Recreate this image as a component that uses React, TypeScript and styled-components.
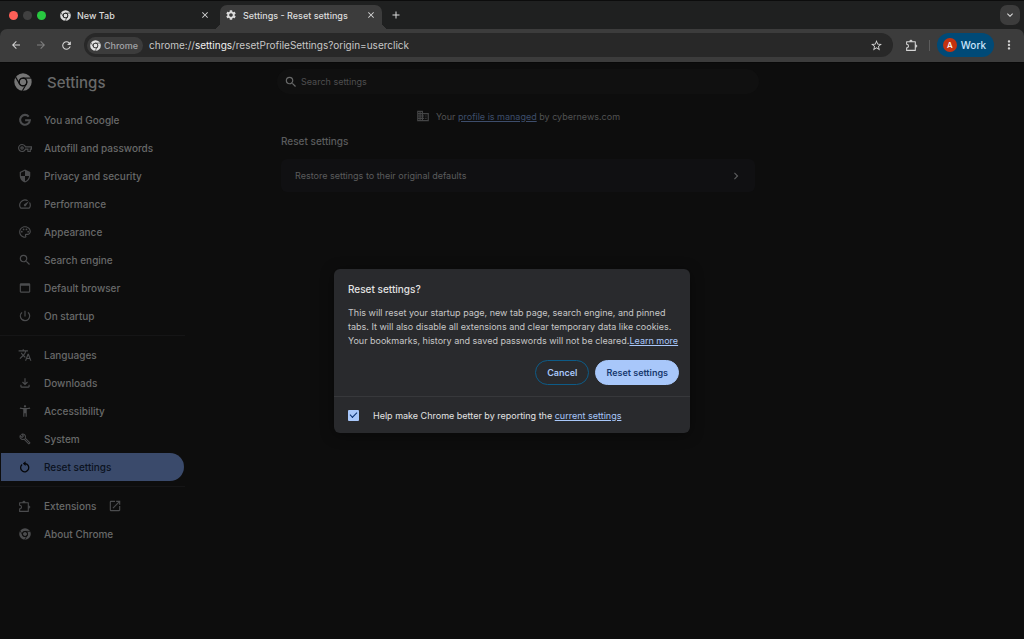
import React from "react";
import styled, { createGlobalStyle, css } from "styled-components";
import {
  MdAccessibilityNew,
  MdAdd,
  MdArrowBack,
  MdArrowForward,
  MdBusiness,
  MdChevronRight,
  MdClose,
  MdExpandMore,
  MdMoreVert,
  MdOpenInNew,
  MdOutlineBuild,
  MdOutlineFileDownload,
  MdOutlinePalette,
  MdOutlineSpeed,
  MdOutlineVpnKey,
  MdPowerSettingsNew,
  MdRefresh,
  MdSearch,
  MdSecurity,
  MdSettings,
  MdStarBorder,
  MdTranslate,
  MdWebAsset,
} from "react-icons/md";

const Global = createGlobalStyle`
  * { box-sizing: border-box; }
  html, body, #root { height: 100%; margin: 0; }
  body { background: #0d0d0d; font-family: Inter, "Liberation Sans", sans-serif; font-size: 9px; }
  button, input { font: inherit; color: inherit; }
  button { border: 0; padding: 0; background: none; display: flex; align-items: center; justify-content: center; }
  svg { display: block; flex: none; }
`;

/* ---------- icons ---------- */

type IconProps = { size?: number };

const ChromeIcon = ({ size = 12 }: IconProps) => (
  <svg width={size} height={size} viewBox="0 0 24 24" fill="none" stroke="currentColor">
    <circle cx="12" cy="12" r="8.7" strokeWidth="5.8" />
    <circle cx="12" cy="12" r="4.2" fill="currentColor" stroke="none" />
    <g stroke="var(--cut, #1f2020)" strokeWidth="1.5">
      <circle cx="12" cy="12" r="5.2" />
      <path d="M12 6.8H22.5" />
      <path d="M7.5 14.6L2.2 5.5" />
      <path d="M16.5 14.6L11.2 23.7" />
    </g>
  </svg>
);

const GoogleIcon = ({ size = 12 }: IconProps) => (
  <svg width={size} height={size} viewBox="0 0 24 24" fill="none" stroke="currentColor" strokeWidth="3.6">
    <path d="M18.4 6.2A8.4 8.4 0 1 0 20.4 12.4H12.2" />
  </svg>
);

const PuzzleIcon = ({ size = 12 }: IconProps) => (
  <svg width={size} height={size} viewBox="0 0 24 24" fill="none" stroke="currentColor" strokeWidth="2" strokeLinejoin="round">
    <path d="M3 5H19V21H3V16.4A3.2 3.2 0 0 0 3 9.6Z" />
    <path d="M8.5 4.5A2.5 2.5 0 0 1 13.5 4.5ZM19.5 10.5A2.5 2.5 0 0 1 19.5 15.5Z" fill="currentColor" strokeWidth="1" />
  </svg>
);

const ResetIcon = ({ size = 12 }: IconProps) => (
  <svg width={size} height={size} viewBox="0 0 24 24" fill="none" stroke="currentColor" strokeWidth="2.2">
    <path d="M7 7.8A7 7 0 1 0 12 6.2H10" />
    <path d="M13 2V10.4L8.4 6.2Z" fill="currentColor" stroke="none" />
  </svg>
);

/* ---------- browser frame ---------- */

const Window = styled.div`
  min-height: 100%;
  display: flex;
  flex-direction: column;
`;

const TabStrip = styled.header`
  height: 29px;
  display: flex;
  align-items: stretch;
  padding: 4px 4px 0 9px;
  background: #1f2020;
  border-top: 1px solid #0c0c0c;
  color: #dcdcdc;
`;

const Lights = styled.div`
  display: flex;
  gap: 5px;
  padding-top: 6px;
  width: 42px;
`;

const Light = styled.span<{ $color: string }>`
  width: 9px;
  height: 9px;
  border-radius: 50%;
  background: ${(p) => p.$color};
`;

const Tab = styled.div<{ $active?: boolean }>`
  position: relative;
  width: ${(p) => (p.$active ? 162 : 169)}px;
  display: flex;
  align-items: center;
  gap: 6px;
  padding: ${(p) => (p.$active ? "0 6px 4px 5px" : "0 10px 4px 9px")};
  font-weight: 500;
  --cut: #1f2020;
  ${(p) =>
    p.$active &&
    css`
      background: #3c3c3c;
      border-radius: 7px 7px 0 0;
      &::before,
      &::after {
        content: "";
        position: absolute;
        bottom: 0;
        width: 7px;
        height: 7px;
      }
      &::before {
        right: 100%;
        background: radial-gradient(circle at 0 0, transparent 7px, #3c3c3c 7px);
      }
      &::after {
        left: 100%;
        background: radial-gradient(circle at 100% 0, transparent 7px, #3c3c3c 7px);
      }
    `}
`;

const TabTitle = styled.span`
  flex: 1;
  white-space: nowrap;
`;

const NewTab = styled.button`
  width: 28px;
  padding-bottom: 4px;
`;

const TabSearch = styled.button`
  margin-left: auto;
  width: 20px;
  height: 20px;
  border-radius: 7px;
  background: #3c3c3c;
`;

const FrameTop = styled.div`
  background: #1f2020;
`;

const Toolbar = styled.div`
  height: 33px;
  display: flex;
  align-items: center;
  gap: 9px;
  padding: 0 7px 1px 8px;
  background: #3c3c3c;
  border-radius: 7px 7px 0 0;
  color: #d4d4d4;
`;

const ToolButton = styled.button<{ $dim?: boolean }>`
  width: 16px;
  height: 20px;
  color: ${(p) => (p.$dim ? "#808080" : "inherit")};
`;

const AddressBar = styled.div`
  flex: 1;
  height: 24px;
  display: flex;
  align-items: center;
  gap: 6px;
  margin: 0 2px 0 1px;
  padding: 0 10px 0 3px;
  border-radius: 12px;
  background: #282828;
  font-size: 10px;
`;

const SiteChip = styled.button`
  height: 17px;
  gap: 3px;
  padding: 0 5px 0 3px;
  border-radius: 9px;
  background: #3c3c3c;
  color: #a3a5a8;
  font-size: 9px;
  font-weight: 500;
  --cut: #3c3c3c;
  svg {
    color: #e3e3e3;
  }
`;

const Url = styled.span`
  flex: 1;
  color: #c7c7c7;
  b {
    font-weight: 400;
    color: #f0f0f0;
  }
`;

const Separator = styled.span`
  width: 1px;
  height: 11px;
  background: #5c5c5c;
`;

const Profile = styled.button`
  height: 24px;
  gap: 4px;
  padding: 0 8px 0 6px;
  margin: 0 -2px;
  border-radius: 12px;
  background: #004a77;
  color: #c9e4fa;
  font-size: 10px;
  font-weight: 500;
`;

const Avatar = styled.span`
  width: 14px;
  height: 14px;
  line-height: 14px;
  border-radius: 50%;
  background: #c4320f;
  color: #fff;
  font-size: 8px;
  text-align: center;
`;

/* ---------- settings page ---------- */

const Page = styled.div`
  position: relative;
  flex: 1;
  display: grid;
  grid-template-columns: 185px 1fr 185px;
  border-top: 1px solid #090909;
  background: #0d0d0d;
  color: #686969;
  --cut: #0d0d0d;
`;

const Sidebar = styled.aside`
  font-size: 10px;
  font-weight: 500;
`;

const Brand = styled.h1`
  margin: 0;
  height: 38px;
  display: flex;
  align-items: center;
  gap: 15px;
  padding-left: 14px;
  font-size: 15px;
  font-weight: 500;
  svg {
    color: #757575;
  }
`;

const NavGroup = styled.nav`
  padding: 5px 0;
  & + & {
    border-top: 1px solid #151516;
  }
`;

const NavLink = styled.a<{ $active?: boolean }>`
  height: 28px;
  margin: 0 1px;
  display: flex;
  align-items: center;
  gap: 12px;
  padding-left: 16px;
  border-radius: 0 14px 14px 0;
  text-decoration: none;
  color: ${(p) => (p.$active ? "#0b1220" : "#686969")};
  background: ${(p) => (p.$active ? "#3a4a6b" : "none")};
  svg {
    color: ${(p) => (p.$active ? "#050608" : "#4b4c4e")};
  }
`;

const NavIcon = styled.span`
  width: 15px;
  display: flex;
  justify-content: center;
`;

const Main = styled.main`
  padding: 6px 80px 0 92px;
`;

const SearchBox = styled.label`
  height: 25px;
  display: flex;
  align-items: center;
  gap: 3px;
  padding: 0 7px;
  border-radius: 13px;
  background: #101010;
  input {
    flex: 1;
    min-width: 0;
    border: 0;
    padding: 0;
    outline: 0;
    background: none;
  }
  input::placeholder {
    color: #4e4e4f;
    opacity: 1;
  }
`;

const Managed = styled.p`
  margin: 15px 0 12px;
  height: 14px;
  display: flex;
  align-items: center;
  justify-content: center;
  gap: 6px;
  color: #515253;
  svg {
    color: #444546;
  }
  a {
    color: #3d4d6b;
  }
`;

const Section = styled.section`
  margin: 0 4px;
`;

const SectionTitle = styled.h2`
  margin: 0 0 12px;
  font-size: 10px;
  line-height: 12px;
  font-weight: 500;
  color: #5b5c5d;
`;

const RowButton = styled.button`
  width: 100%;
  height: 33px;
  justify-content: space-between;
  padding: 0 12px 0 14px;
  border-radius: 6px;
  background: #101012;
  color: #5b5c5d;
`;

/* ---------- dialog ---------- */

const Overlay = styled.div`
  position: absolute;
  inset: 0;
  display: flex;
  align-items: center;
  justify-content: center;
`;

const Dialog = styled.div`
  width: 356px;
  border-radius: 6px;
  background: #292a2d;
  color: #e3e3e3;
  box-shadow: 0 2px 14px #0006;
  a {
    color: #a8c7fa;
  }
`;

const DialogBody = styled.div`
  padding: 13px 11px 11px 14px;
`;

const DialogTitle = styled.h2`
  margin: 0 0 10px;
  font-size: 10px;
  line-height: 14px;
  font-weight: 500;
`;

const DialogText = styled.p`
  margin: 0 0 12px;
  line-height: 14px;
  color: #c7c7c7;
`;

const Actions = styled.div`
  display: flex;
  justify-content: flex-end;
  gap: 6px;
`;

const ActionButton = styled.button<{ $primary?: boolean }>`
  height: 25px;
  padding: 0 ${(p) => (p.$primary ? 10 : 11)}px;
  border-radius: 13px;
  font-weight: 600;
  border: 1px solid ${(p) => (p.$primary ? "#a8c7fa" : "#0d5b87")};
  background: ${(p) => (p.$primary ? "#a8c7fa" : "none")};
  color: ${(p) => (p.$primary ? "#17396f" : "#a8c7fa")};
`;

const DialogFooter = styled.div`
  height: 37px;
  display: flex;
  align-items: center;
  gap: 14px;
  padding: 0 14px;
  border-top: 1px solid #37383b;
`;

const Checkbox = styled.input`
  appearance: none;
  width: 11px;
  height: 11px;
  margin: 0;
  border-radius: 1px;
  background: #a8c7fa;
  display: grid;
  place-items: center;
  &:checked::after {
    content: "";
    width: 6px;
    height: 3px;
    margin-bottom: 2px;
    border-left: 1px solid #062e6f;
    border-bottom: 1px solid #062e6f;
    transform: rotate(-45deg);
  }
`;

const groups = [
  [
    { label: "You and Google", Icon: GoogleIcon },
    { label: "Autofill and passwords", Icon: MdOutlineVpnKey },
    { label: "Privacy and security", Icon: MdSecurity },
    { label: "Performance", Icon: MdOutlineSpeed },
    { label: "Appearance", Icon: MdOutlinePalette },
    { label: "Search engine", Icon: MdSearch },
    { label: "Default browser", Icon: MdWebAsset },
    { label: "On startup", Icon: MdPowerSettingsNew },
  ],
  [
    { label: "Languages", Icon: MdTranslate },
    { label: "Downloads", Icon: MdOutlineFileDownload },
    { label: "Accessibility", Icon: MdAccessibilityNew },
    { label: "System", Icon: MdOutlineBuild, size: 12 },
    { label: "Reset settings", Icon: ResetIcon },
  ],
  [
    { label: "Extensions", Icon: PuzzleIcon, size: 13 },
    { label: "About Chrome", Icon: ChromeIcon, size: 12 },
  ],
] as { label: string; Icon: React.ComponentType<IconProps>; size?: number }[][];

export default function App() {
  return (
    <Window>
      <Global />
      <TabStrip>
        <Lights>
          <Light $color="#ff5f57" />
          <Light $color="#404040" />
          <Light $color="#28c840" />
        </Lights>
        <Tab>
          <ChromeIcon size={11} />
          <TabTitle>New Tab</TabTitle>
          <button aria-label="Close tab"><MdClose size={10} /></button>
        </Tab>
        <Tab $active>
          <MdSettings size={12} />
          <TabTitle>Settings - Reset settings</TabTitle>
          <button aria-label="Close tab"><MdClose size={10} /></button>
        </Tab>
        <NewTab aria-label="New tab"><MdAdd size={12} /></NewTab>
        <TabSearch aria-label="Search tabs"><MdExpandMore size={12} /></TabSearch>
      </TabStrip>
      <FrameTop>
        <Toolbar>
          <ToolButton aria-label="Back"><MdArrowBack size={12} /></ToolButton>
          <ToolButton aria-label="Forward" $dim><MdArrowForward size={12} /></ToolButton>
          <ToolButton aria-label="Reload"><MdRefresh size={13} /></ToolButton>
          <AddressBar>
            <SiteChip><ChromeIcon size={11} />Chrome</SiteChip>
            <Url>chrome://<b>settings</b>/resetProfileSettings?origin=userclick</Url>
            <button aria-label="Bookmark this tab"><MdStarBorder size={13} /></button>
          </AddressBar>
          <ToolButton aria-label="Extensions"><PuzzleIcon size={13} /></ToolButton>
          <Separator />
          <Profile><Avatar>A</Avatar>Work</Profile>
          <ToolButton aria-label="Menu"><MdMoreVert size={14} /></ToolButton>
        </Toolbar>
      </FrameTop>
      <Page>
        <Sidebar>
          <Brand><ChromeIcon size={18} />Settings</Brand>
          {groups.map((items, i) => (
            <NavGroup key={i}>
              {items.map(({ label, Icon, size = 14 }) => (
                <NavLink href="#" key={label} $active={label === "Reset settings"}>
                  <NavIcon><Icon size={size} /></NavIcon>
                  {label}
                  {label === "Extensions" && <MdOpenInNew size={14} />}
                </NavLink>
              ))}
            </NavGroup>
          ))}
        </Sidebar>
        <Main>
          <SearchBox>
            <MdSearch size={14} />
            <input type="search" placeholder="Search settings" aria-label="Search settings" />
          </SearchBox>
          <Managed>
            <MdBusiness size={14} />
            <span>Your <a href="#">profile is managed</a> by cybernews.com</span>
          </Managed>
          <Section>
            <SectionTitle>Reset settings</SectionTitle>
            <RowButton>
              Restore settings to their original defaults
              <MdChevronRight size={14} />
            </RowButton>
          </Section>
        </Main>
        <Overlay>
          <Dialog role="dialog" aria-labelledby="dialog-title">
            <DialogBody>
              <DialogTitle id="dialog-title">Reset settings?</DialogTitle>
              <DialogText>
                This will reset your startup page, new tab page, search engine, and pinned tabs. It will also
                disable all extensions and clear temporary data like cookies. Your bookmarks, history and saved
                passwords will not be cleared.<a href="#">Learn more</a>
              </DialogText>
              <Actions>
                <ActionButton>Cancel</ActionButton>
                <ActionButton $primary>Reset settings</ActionButton>
              </Actions>
            </DialogBody>
            <DialogFooter>
              <Checkbox type="checkbox" id="report" defaultChecked />
              <label htmlFor="report">
                Help make Chrome better by reporting the <a href="#">current settings</a>
              </label>
            </DialogFooter>
          </Dialog>
        </Overlay>
      </Page>
    </Window>
  );
}
